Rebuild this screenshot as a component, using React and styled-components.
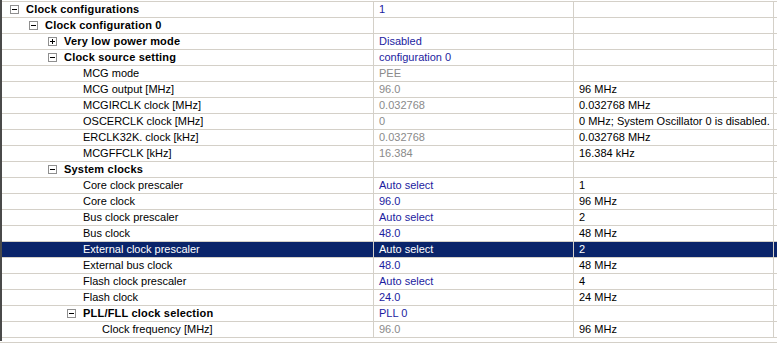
import React from "react";
import styled, { createGlobalStyle } from "styled-components";

const Global = createGlobalStyle`
  html, body { margin: 0; padding: 0; background: #fff; }
  body { font-family: "Liberation Sans", Arial, sans-serif; font-size: 11px; }
`;

const Page = styled.div`
  width: 777px;
  height: 345px;
  overflow: hidden;
  background: #fff;
`;

const Table = styled.div`
  border-left: 2px solid #4a4a4a;
  padding-top: 1px;
  padding-bottom: 3px;
`;

const Rows = styled.div`
  border-top: 1px solid #d4d0c8;
`;

const Row = styled.div`
  display: grid;
  grid-template-columns: 372px 200px 200px 1fr;
  height: 15px;
  border-bottom: 1px solid #d4d0c8;
  background: ${(p) => (p.$selected ? "#0a246a" : "#fff")};
  color: ${(p) => (p.$selected ? "#fff" : "#000")};
`;

const Cell = styled.div`
  display: flex;
  align-items: center;
  border-right: ${(p) => (p.$last ? "none" : "1px solid #d4d0c8")};
  padding-left: ${(p) => (p.$last ? 0 : 5)}px;
  white-space: nowrap;
  overflow: hidden;
  line-height: 15px;
`;

const NameCell = styled(Cell)`
  padding-left: 0;
`;

const Indent = styled.span`
  display: inline-block;
  flex: none;
  width: ${(p) => 8 + p.$level * 19}px;
`;

const Expander = styled.span`
  flex: none;
  position: relative;
  box-sizing: border-box;
  width: 9px;
  height: 9px;
  border: 1px solid #8f8f8f;
  background: #fff;
  margin-right: 7px;
  &::before {
    content: "";
    position: absolute;
    left: 1px;
    top: 3px;
    width: 5px;
    height: 1px;
    background: #000;
  }
  &::after {
    content: "";
    display: ${(p) => (p.$open ? "none" : "block")};
    position: absolute;
    left: 3px;
    top: 1px;
    width: 1px;
    height: 5px;
    background: #000;
  }
`;

const Spacer = styled.span`
  flex: none;
  width: 16px;
`;

const Label = styled.span`
  font-weight: ${(p) => (p.$bold ? 700 : 400)};
  letter-spacing: ${(p) => (p.$bold ? "0.2px" : "0")};
`;

const Value = styled.span`
  color: ${(p) =>
    p.$selected ? "#fff" : p.$tone === "blue" ? "#1c1ca0" : p.$tone === "gray" ? "#8a8a8a" : "#000"};
`;

const Footer = styled.div`
  margin-top: 1px;
  border-top: 1px solid #d4d0c8;
`;

const rows = [
  { l: 0, name: "Clock configurations", bold: true, exp: "open", v: "1", t: "blue" },
  { l: 1, name: "Clock configuration 0", bold: true, exp: "open" },
  { l: 2, name: "Very low power mode", bold: true, exp: "closed", v: "Disabled", t: "blue" },
  { l: 2, name: "Clock source setting", bold: true, exp: "open", v: "configuration 0", t: "blue" },
  { l: 3, name: "MCG mode", v: "PEE", t: "gray" },
  { l: 3, name: "MCG output [MHz]", v: "96.0", t: "gray", r: "96 MHz" },
  { l: 3, name: "MCGIRCLK clock [MHz]", v: "0.032768", t: "gray", r: "0.032768 MHz" },
  { l: 3, name: "OSCERCLK clock [MHz]", v: "0", t: "gray", r: "0 MHz; System Oscillator 0 is disabled." },
  { l: 3, name: "ERCLK32K. clock [kHz]", v: "0.032768", t: "gray", r: "0.032768 MHz" },
  { l: 3, name: "MCGFFCLK [kHz]", v: "16.384", t: "gray", r: "16.384 kHz" },
  { l: 2, name: "System clocks", bold: true, exp: "open" },
  { l: 3, name: "Core clock prescaler", v: "Auto select", t: "blue", r: "1" },
  { l: 3, name: "Core clock", v: "96.0", t: "blue", r: "96 MHz" },
  { l: 3, name: "Bus clock prescaler", v: "Auto select", t: "blue", r: "2" },
  { l: 3, name: "Bus clock", v: "48.0", t: "blue", r: "48 MHz" },
  { l: 3, name: "External clock prescaler", v: "Auto select", t: "blue", r: "2", sel: true },
  { l: 3, name: "External bus clock", v: "48.0", t: "blue", r: "48 MHz" },
  { l: 3, name: "Flash clock prescaler", v: "Auto select", t: "blue", r: "4" },
  { l: 3, name: "Flash clock", v: "24.0", t: "blue", r: "24 MHz" },
  { l: 3, name: "PLL/FLL clock selection", bold: true, exp: "open", v: "PLL 0", t: "blue" },
  { l: 4, name: "Clock frequency [MHz]", v: "96.0", t: "gray", r: "96 MHz" },
];

export default function App() {
  return (
    <Page>
      <Global />
      <Table>
        <Rows>
          {rows.map((r, i) => (
            <Row key={i} $selected={r.sel}>
              <NameCell>
                <Indent $level={r.l} />
                {r.exp ? <Expander $open={r.exp === "open"} /> : <Spacer />}
                <Label $bold={r.bold}>{r.name}</Label>
              </NameCell>
              <Cell>
                <Value $tone={r.t} $selected={r.sel}>{r.v || ""}</Value>
              </Cell>
              <Cell>
                <Value $selected={r.sel}>{r.r || ""}</Value>
              </Cell>
              <Cell $last />
            </Row>
          ))}
        </Rows>
      </Table>
      <Footer />
    </Page>
  );
}
